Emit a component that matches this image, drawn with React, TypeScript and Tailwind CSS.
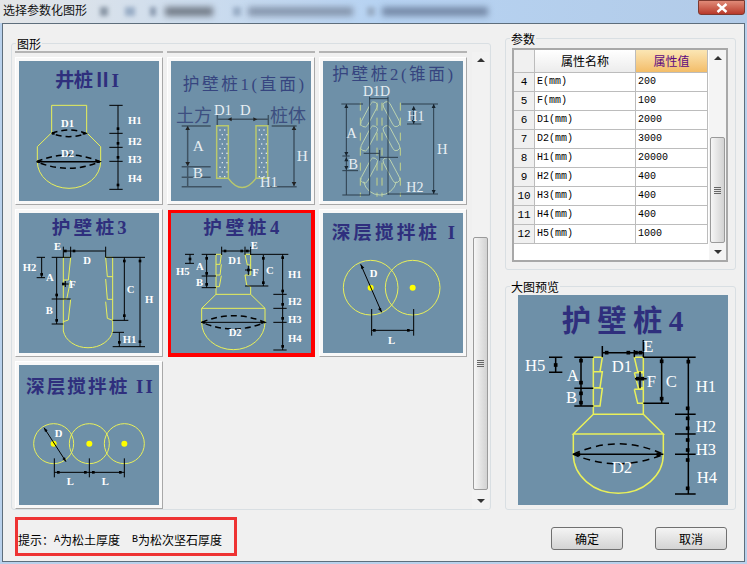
import React from "react";

const SERIF = '"Liberation Serif","Noto Sans CJK SC",serif';
const Y = "#e9f05a";

function L({ d, c = "#000", dash, w = 1 }: { d: string; c?: string; dash?: string; w?: number }) {
  return <path d={d} fill="none" stroke={c} strokeWidth={w} strokeDasharray={dash} vectorEffect="non-scaling-stroke" />;
}
function T({ x, y, s = 32, c = "#fff", b = true, children }: { x: number; y: number; s?: number; c?: string; b?: boolean; children: React.ReactNode }) {
  return (
    <text x={x} y={y} fontSize={s} fill={c} fontWeight={b ? 700 : 400} fontFamily={SERIF}>
      {children}
    </text>
  );
}
function Title({ x, y, w, s = 56, c = "#2f2f7d", b = true, children }: { x: number; y: number; w: number; s?: number; c?: string; b?: boolean; children: React.ReactNode }) {
  return (
    <text x={x} y={y} fontSize={s} fill={c} fontWeight={b ? 700 : 400} fontFamily={SERIF} textLength={w} lengthAdjust="spacing">
      {children}
    </text>
  );
}
function Mark({ x, y, c = "#000", s = 8 }: { x: number; y: number; c?: string; s?: number }) {
  return <rect x={x - s / 2} y={y - s / 2} width={s} height={s} fill={c} />;
}
function Pic({ vb, size = 140, children }: { vb: string; size?: number; children: React.ReactNode }) {
  return (
    <svg viewBox={vb} width={size} height={size} className="block bg-[#6e90a8]">
      {children}
    </svg>
  );
}

function Well() {
  return (
    <Pic vb="57 183 420 420">
      <Title x={165} y={262} w={192} s={58}>井桩ⅡI</Title>
      <L c={Y} d="M155 398V316H260V398L302 440V485A95 80 0 0 1 112 485V440L155 398" />
      <L dash="6 4" d="M155 400Q207 380 258 400Q207 420 155 400" w={1.5} />
      <L dash="6 4" d="M110 485Q205 445 300 485Q205 525 110 485" w={1.5} />
      <L d="M110 485H300" w={1.5} />
      <L d="M354 316V568M328 316H368M328 400H368M328 442H368M328 484H368M328 568H368" />
      <Mark x={354} y={386} /><Mark x={354} y={430} /><Mark x={354} y={472} /><Mark x={354} y={555} />
      <Mark x={160} y={400} /><Mark x={252} y={400} /><Mark x={116} y={485} /><Mark x={294} y={485} />
      <T x={183} y={380}>D1</T><T x={183} y={470}>D2</T>
      <T x={384} y={371}>H1</T><T x={384} y={434}>H2</T><T x={384} y={488}>H3</T><T x={384} y={546}>H4</T>
    </Pic>
  );
}

function Pile1() {
  const g = "#3f5363";
  const dots: React.ReactNode[] = [];
  for (let y = 388; y < 530; y += 14) {
    const o = (y - 388) % 28 === 0 ? 0 : 7;
    [660, 674, 778, 792].forEach((x) => dots.push(<rect key={`${x}-${y}`} x={x + o - 2} y={y} width={4} height={4} fill="#dfe8ee" />));
  }
  return (
    <Pic vb="513 183 420 420">
      <Title x={548} y={270} w={364} s={50} c="#36457f" b={false}>护壁桩1(直面)</Title>
      <T x={528} y={365} s={54} c="#3d4f80" b={false}>土方</T>
      <T x={810} y={365} s={54} c="#3d4f80" b={false}>桩体</T>
      <L c="#b9c86c" w={1.5} d="M650 377H685V535H650ZM768 377H803V535H768ZM685 535Q726 590 768 535" />
      {dots}
      <L c={g} w={1.5} d="M545 378H632M545 500H632M545 532H632M545 560H665M563 380V560M815 378H890M800 560H890M882 380V560M652 358H805M652 345V375M805 345V375" />
      <path d="M563 378l-7 12h14zM563 498l-7-12h14zM882 378l-7 12h14zM882 558l-7-12h14zM683 358l12-6v12zM772 358l-12-6v12z" fill="#222" />
      <T x={642} y={346} s={44} c="#e7eef2" b={false}>D1</T>
      <T x={720} y={346} s={44} c="#e7eef2" b={false}>D</T>
      <T x={578} y={452} s={46} c="#e7eef2" b={false}>A</T>
      <T x={578} y={535} s={46} c="#e7eef2" b={false}>B</T>
      <T x={890} y={482} s={46} c="#e7eef2" b={false}>H</T>
      <T x={780} y={562} s={44} c="#e7eef2" b={false}>H1</T>
    </Pic>
  );
}

function Pile2() {
  const g = "#2d3e4c";
  const p = "#bcd3b0";
  return (
    <Pic vb="10 183 420 420">
      <Title x={38} y={240} w={362} s={50} c="#36457f" b={false}>护壁桩2(锥面)</Title>
      <L c="#c5d488" dash="8 7" d="M122 308V590M172 308V590M187 308V590M242 308V590" />
      {[0, 72, 168].map((o) => (
        <g key={o}>
          <rect x={-10} y={-40} width={22} height={82} rx={11} fill="none" stroke={p} vectorEffect="non-scaling-stroke" transform={`translate(148 ${342 + o}) rotate(28)`} />
          <rect x={-10} y={-40} width={22} height={82} rx={11} fill="none" stroke={p} vectorEffect="non-scaling-stroke" transform={`translate(214 ${342 + o}) rotate(-28)`} />
        </g>
      ))}
      <L c={p} d="M132 545A50 50 0 0 0 230 545" />
      <L c={g} d="M65 312H130M68 468H90M68 512H115M68 585H150M80 312V585M245 312H355M205 582H355M342 312V582M282 320V372M262 372H305M150 290V585M205 290V585M150 296H205M132 460H180M180 472H235M180 450V482" />
      <path d="M80 312l-6 12h12zM80 468l-6-12h12zM80 472l-6 12h12zM80 510l-6-12h12zM342 312l-6 12h12zM342 582l-6-12h12zM282 318l-6 12h12zM282 372l-6-12h12z" fill="#16222c" />
      <T x={130} y={288} s={42} c="#e7eef2" b={false}>D1D</T>
      <T x={80} y={414} s={44} c="#e7eef2" b={false}>A</T>
      <T x={86} y={506} s={44} c="#e7eef2" b={false}>B</T>
      <T x={263} y={362} s={42} c="#e7eef2" b={false}>H1</T>
      <T x={352} y={462} s={44} c="#e7eef2" b={false}>H</T>
      <T x={260} y={575} s={42} c="#e7eef2" b={false}>H2</T>
    </Pic>
  );
}

function Pile3() {
  return (
    <Pic vb="57 24 420 420">
      <Title x={155} y={88} w={225} s={56}>护壁桩3</Title>
      <L c={Y} d="M190 157H212L205 225H190M212 225L200 283H190M212 283L205 345L190 350M190 157V378A75 60 0 0 0 338 378V157H317L322 215H338M317 222L322 283H338M317 290L322 340L338 346" />
      <L d="M190 125V157M212 125V157M317 125V157M190 138H317M155 157H212M317 157H435M170 157V357M155 282H212M155 357H190M125 157V218M110 157H135M110 218H135M373 157V346M338 346H385M420 157V425M338 425H435M358 382V425M338 382H372M186 237H206M196 228V246" />
      <Mark x={196} y={138} /><Mark x={222} y={138} /><Mark x={170} y={270} /><Mark x={170} y={346} /><Mark x={125} y={208} /><Mark x={373} y={168} /><Mark x={373} y={332} /><Mark x={420} y={168} /><Mark x={420} y={410} /><Mark x={358} y={412} /><Mark x={190} y={237} />
      <T x={162} y={136}>E</T><T x={250} y={176}>D</T><T x={68} y={198}>H2</T><T x={138} y={229}>A</T><T x={208} y={248}>F</T><T x={380} y={263}>C</T><T x={435} y={293}>H</T><T x={137} y={328}>B</T><T x={368} y={414}>H1</T>
    </Pic>
  );
}

function Pile4() {
  return (
    <Pic vb="513 24 420 420">
      <Title x={610} y={88} w={228} s={56}>护壁桩4</Title>
      <L c={Y} d="M648 148H664L660 178H648M664 178L660 210H648M664 212L658 245H648M648 148V268H752V245L740 240L735 210H752M735 148H752V210M735 148L742 180H752M648 268L605 310H795L752 268M605 310V352A95 82 0 0 0 795 352V310" />
      <L dash="6 4" d="M605 352Q700 312 795 352Q700 392 605 352" w={1.5} />
      <L d="M603 352H795M665 125V150M735 125V150M752 125V150M665 138H752M605 148H648M752 148H865M620 148V248M605 213H648M605 248H648M555 148H582M555 175H582M570 148V175M790 150V243M735 243H805M848 148V435M820 268H860M820 310H860M820 352H860M820 435H860M735 195H757M745 182V210" />
      <Mark x={612} y={352} /><Mark x={786} y={352} /><Mark x={675} y={138} /><Mark x={725} y={138} /><Mark x={742} y={138} /><Mark x={620} y={160} /><Mark x={620} y={205} /><Mark x={620} y={238} /><Mark x={570} y={162} /><Mark x={790} y={160} /><Mark x={790} y={233} /><Mark x={848} y={158} /><Mark x={848} y={258} /><Mark x={848} y={298} /><Mark x={848} y={340} /><Mark x={848} y={424} /><Mark x={745} y={195} />
      <T x={752} y={133}>E</T><T x={685} y={178}>D1</T><T x={757} y={212}>F</T><T x={798} y={208}>C</T>
      <T x={528} y={211}>H5</T><T x={588} y={196}>A</T><T x={588} y={244}>B</T>
      <T x={864} y={219}>H1</T><T x={864} y={301}>H2</T><T x={864} y={354}>H3</T><T x={864} y={411}>H4</T>
      <T x={686} y={392}>D2</T>
    </Pic>
  );
}

function Preview() {
  const marks: [number, number][] = [
    [305, 248], [370, 248], [393, 248], [406, 248],
    [152, 285], [228, 272], [228, 338], [228, 370], [228, 398],
    [398, 326], [412, 326],
    [470, 274], [470, 386],
    [550, 275], [548, 415], [548, 445], [548, 475], [548, 510], [548, 540], [548, 570], [548, 655],
    [220, 553], [460, 553],
  ];
  return (
    <Pic vb="39 75 630 630" size={210}>
      <Title x={170} y={182} w={365} s={88}>护壁桩4</Title>
      <L c={Y} w={1.5} d="M265 262H292L285 305H265M265 305H292L285 353H265M265 353L292 355L285 408H265M265 262V433H415V262H388L398 305H415M388 308H415M388 308L400 353H415M388 358H415M388 358L398 400H415M265 433L205 492H475L415 433M205 492V553A135 117 0 0 0 475 553V492" />
      <L dash="7 5" w={1.5} d="M205 553Q340 490 475 553Q340 610 205 553" />
      <L w={1.5} d="M203 553H475M292 228V262M388 240V262M415 210V262M292 248H415M415 262H572M208 262H265M228 262V408M208 355H265M208 408H265M132 262H172M132 307H172M152 262V307M470 262V400M415 400H492M550 262V672M510 433H572M510 492H572M510 553H572M510 672H572M390 326H425M405 305V355" />
      {marks.map(([x, y]) => <Mark key={`${x}-${y}`} x={x} y={y} s={11} />)}
      <T x={415} y={245} s={50} b={false}>E</T>
      <T x={320} y={305} s={50} b={false}>D1</T>
      <T x={425} y={352} s={50} b={false}>F</T>
      <T x={482} y={350} s={50} b={false}>C</T>
      <T x={60} y={304} s={50} b={false}>H5</T>
      <T x={185} y={332} s={50} b={false}>A</T>
      <T x={183} y={400} s={50} b={false}>B</T>
      <T x={572} y={365} s={50} b={false}>H1</T>
      <T x={572} y={485} s={50} b={false}>H2</T>
      <T x={572} y={555} s={50} b={false}>H3</T>
      <T x={575} y={640} s={50} b={false}>H4</T>
      <T x={320} y={610} s={50} b={false}>D2</T>
    </Pic>
  );
}

function Mix1() {
  return (
    <Pic vb="24 24 420 420">
      <Title x={50} y={102} w={370} s={56}>深层搅拌桩 I</Title>
      <circle cx={167} cy={248} r={82} fill="none" stroke={Y} vectorEffect="non-scaling-stroke" />
      <circle cx={293} cy={248} r={82} fill="none" stroke={Y} vectorEffect="non-scaling-stroke" />
      <circle cx={167} cy={248} r={9} fill="#ffff00" />
      <circle cx={293} cy={248} r={9} fill="#ffff00" />
      <L d="M137 178L200 322M170 312V392M296 312V392M170 376H296" />
      <path d="M137 178l2 14 9-4zM200 322l-2-14-9 4z" fill="#000" />
      <Mark x={178} y={376} /><Mark x={280} y={376} />
      <T x={164} y={217}>D</T><T x={219} y={416}>L</T>
    </Pic>
  );
}

function Mix2() {
  return (
    <Pic vb="57 15 420 420">
      <Title x={78} y={100} w={380} s={56}>深层搅拌桩 II</Title>
      {[161, 268, 373].map((x) => (
        <g key={x}>
          <circle cx={x} cy={251} r={60} fill="none" stroke={Y} vectorEffect="non-scaling-stroke" />
          <circle cx={x} cy={251} r={9} fill="#ffff00" />
        </g>
      ))}
      <L d="M132 203L198 305M163 295V352M268 295V352M373 295V352M163 337H373" />
      <path d="M132 203l3 13 8-5zM198 305l-3-13-8 5z" fill="#000" />
      <Mark x={175} y={337} /><Mark x={256} y={337} /><Mark x={280} y={337} /><Mark x={361} y={337} />
      <T x={164} y={230}>D</T><T x={200} y={374}>L</T><T x={305} y={374}>L</T>
    </Pic>
  );
}

function Tile({ children }: { children: React.ReactNode }) {
  return <div className="w-[148px] h-[148px] border border-t-white border-l-white border-r-[#a8a8a8] border-b-[#a8a8a8] bg-[#f8f8f8] p-[3px]">{children}</div>;
}

function Group({ label, className, children }: { label: string; className: string; children: React.ReactNode }) {
  return (
    <div className={`relative border border-[#d9dfe3] rounded-[3px] ${className}`}>
      <span className="absolute -top-[7px] left-[4px] bg-[#f0f0f0] px-px text-[12px] leading-[14px] text-black">{label}</span>
      {children}
    </div>
  );
}

function ScrollBar({ thumbTop, thumbH, className }: { thumbTop: string; thumbH: string; className: string }) {
  return (
    <div className={`flex flex-col items-center bg-[#f2f2f2] ${className}`}>
      <div className="h-[5px] mt-[5px] w-0 border-x-[4px] border-x-transparent border-b-[4px] border-b-[#333]" />
      <div className={thumbTop} />
      <div className={`flex w-[15px] items-center justify-center rounded-[2px] border border-[#9a9a9a] bg-linear-to-r from-[#f6f6f6] to-[#d2d2d2] ${thumbH}`}>
        <div className="flex flex-col gap-px">
          <div className="h-px w-[7px] bg-[#666]" />
          <div className="h-px w-[7px] bg-[#666]" />
          <div className="h-px w-[7px] bg-[#666]" />
          <div className="h-px w-[7px] bg-[#666]" />
        </div>
      </div>
      <div className="flex-1" />
      <div className="h-[5px] mb-[5px] w-0 border-x-[4px] border-x-transparent border-t-[4px] border-t-[#333]" />
    </div>
  );
}

const rows: [string, string, string][] = [
  ["4", "E(mm)", "200"],
  ["5", "F(mm)", "100"],
  ["6", "D1(mm)", "2000"],
  ["7", "D2(mm)", "3000"],
  ["8", "H1(mm)", "20000"],
  ["9", "H2(mm)", "400"],
  ["10", "H3(mm)", "400"],
  ["11", "H4(mm)", "400"],
  ["12", "H5(mm)", "1000"],
];

function Btn({ children }: { children: React.ReactNode }) {
  return <div className="flex h-[23px] w-[72px] items-center justify-center rounded-[3px] border border-[#707070] bg-linear-to-b from-[#f4f4f4] to-[#d4d4d4] text-[12px] text-black">{children}</div>;
}

const mono = "font-['Liberation_Mono'] text-[10px]";

export default function App() {
  return (
    <div className="flex h-[564px] w-[747px] flex-col overflow-hidden bg-[#b9d1ec] font-['Noto_Sans_CJK_SC',sans-serif] text-black">
      <div className="flex h-[23px] items-start bg-linear-to-r from-[#e4e6e8] via-[#b7d3f2] to-[#b2cbe8]">
        <span className="ml-[3px] mt-[2px] text-[12px] leading-[16px] text-[#111]">选择参数化图形</span>
        <div className="ml-[13px] mt-[7px] h-[9px] w-[8px] bg-[#8a97a6] blur-[2px]" />
        <div className="ml-[17px] mt-[7px] h-[9px] w-[10px] bg-[#9aaec6] blur-[2px]" />
        <div className="ml-[15px] mt-[7px] h-[9px] w-[6px] bg-[#8b9bb0] blur-[2px]" />
        <div className="ml-[9px] mt-[7px] h-[9px] w-[48px] bg-[#717a86] blur-[3px]" />
        <div className="ml-[20px] mt-[7px] h-[9px] w-[8px] bg-[#9aaec6] blur-[2px]" />
        <div className="ml-[7px] mt-[7px] h-[9px] w-[105px] bg-[#8595ac] blur-[3px]" />
        <div className="ml-[14px] mt-[7px] h-[9px] w-[8px] bg-[#9aaec6] blur-[2px]" />
        <div className="ml-[7px] mt-[7px] h-[9px] w-[106px] bg-[#7488a6] blur-[3px]" />
        <div className="ml-auto mr-[2px] flex h-[15px] w-[47px] items-center justify-center rounded-b-[3px] border border-[#7d3a30] bg-linear-to-b from-[#e08a78] to-[#b8382a] text-[13px] font-bold leading-none text-white">
          <svg width="12" height="10" viewBox="0 0 12 10"><path d="M1.5 1L10.5 9M10.5 1L1.5 9" stroke="#fff" strokeWidth="2.4" /></svg>
        </div>
      </div>
      <div className="mx-[2px] flex h-[539px] flex-col border border-[#5e6e7c] bg-[#f0f0f0] pt-[14px]">
        <div className="flex gap-[14px] pl-[8px]">
          <Group label="图形" className="mt-[5px] flex h-[467px] w-[480px]">
            <div className="grid grid-cols-[repeat(3,148px)] grid-rows-[3px_148px_148px_148px] gap-x-[4px] gap-y-[4px] pl-[3px] pt-[6px]">
              <div className="border-b-2 border-[#b4b4b4]" />
              <div className="border-b-2 border-[#b4b4b4]" />
              <div className="border-b-2 border-[#b4b4b4]" />
              <Tile><Well /></Tile>
              <Tile><Pile1 /></Tile>
              <Tile><Pile2 /></Tile>
              <Tile><Pile3 /></Tile>
              <div className="pl-px pt-px">
                <div className="border-b-[4px] border-l-[3px] border-r-[4px] border-t-[3px] border-[#ff0000]"><Pile4 /></div>
              </div>
              <Tile><Mix1 /></Tile>
              <Tile><Mix2 /></Tile>
            </div>
            <ScrollBar className="ml-auto mt-[8px] w-[17px] mr-px" thumbTop="h-[175px]" thumbH="h-[253px]" />
          </Group>
          <div className="flex w-[231px] flex-col gap-[16px]">
            <Group label="参数" className="h-[232px] pl-[6px] pt-[9px]">
              <div className="flex h-[214px] w-[216px] border-2 border-[#a8a8a8] bg-white">
                <div className="w-[195px] text-[12px]">
                  <div className="flex h-[23px] border-b border-[#bcbcbc]">
                    <div className="w-[21px] border-r border-[#bcbcbc] bg-[#f0f0f0]" />
                    <div className="flex w-[101px] items-center justify-center border-r border-[#bcbcbc] bg-linear-to-b from-white to-[#ececec]">属性名称</div>
                    <div className="flex w-[72px] items-center justify-center border-r border-[#bcbcbc] bg-linear-to-b from-[#fbe6b4] to-[#f3bd68] text-[#5c0a80]">属性值</div>
                  </div>
                  {rows.map(([n, name, v]) => (
                    <div key={n} className={`flex h-[19px] border-b border-[#bcbcbc] leading-[18px] ${mono}`}>
                      <div className="flex w-[21px] justify-center border-r border-[#bcbcbc] bg-[#f0f0f0] text-[11px]">{n}</div>
                      <div className="w-[101px] border-r border-[#bcbcbc] pl-[2px]">{name}</div>
                      <div className="w-[72px] border-r border-[#bcbcbc] pl-[2px]">{v}</div>
                    </div>
                  ))}
                </div>
                <ScrollBar className="ml-[1px] w-[17px] bg-[#f4f4f4]" thumbTop="h-[77px]" thumbH="h-[106px]" />
              </div>
            </Group>
            <Group label="大图预览" className="h-[224px] pl-[12px] pt-[8px]">
              <Preview />
            </Group>
          </div>
        </div>
        <div className="flex items-start pl-[12px] pt-[7px]">
          <div className="flex h-[39px] w-[222px] items-end border-[3px] border-[#ee3333] pb-[5px] text-[12px] leading-[16px] whitespace-pre text-black">
            <span className="w-[36px]">{"提示\uFF1A"}</span>
            <span className={mono}>A</span>
            <span>为松土厚度</span>
            <span className={mono}>{"  B"}</span>
            <span>为松次坚石厚度</span>
          </div>
          <div className="ml-[314px] mt-[10px] flex gap-[32px]">
            <Btn>确定</Btn>
            <Btn>取消</Btn>
          </div>
        </div>
      </div>
    </div>
  );
}
